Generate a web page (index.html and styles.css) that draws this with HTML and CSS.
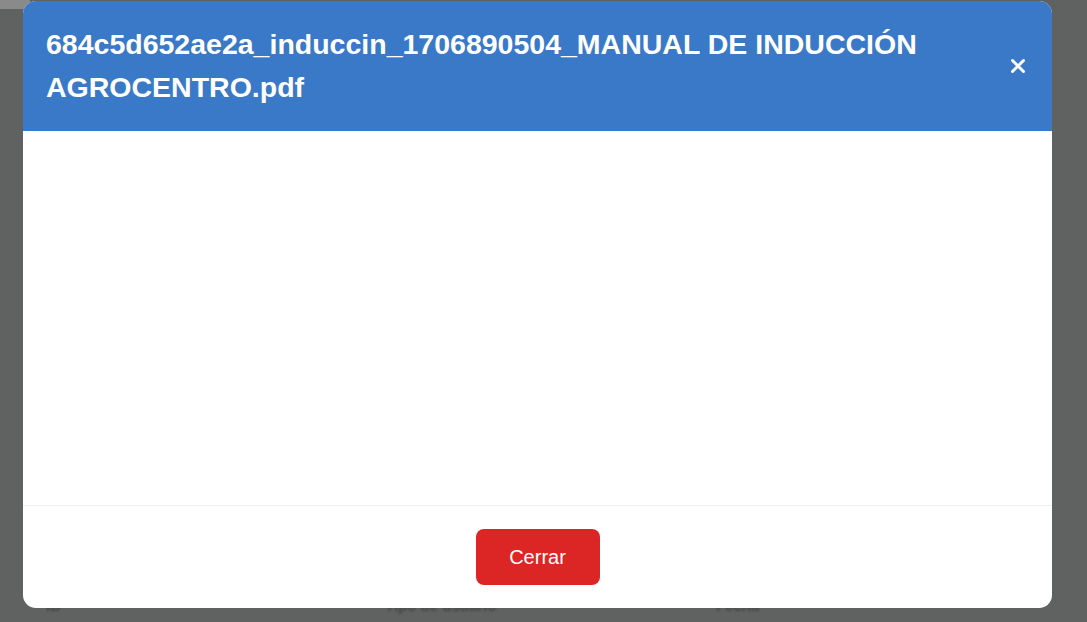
FILE: index.html
```html
<!DOCTYPE html>
<html lang="es">
<head>
<meta charset="utf-8">
<title>Documento</title>
<link rel="stylesheet" href="styles.css">
</head>
<body>
<div class="page">
  <div class="corner-patch"></div>
  <div class="table-head">
    <span class="th th-id">ID</span>
    <span class="th th-type">Tipo de usuario</span>
    <span class="th th-date">Fecha</span>
  </div>
</div>
<div class="overlay">
  <div class="modal">
    <div class="modal-header">
      <h2 class="modal-title">684c5d652ae2a_induccin_1706890504_MANUAL DE INDUCCIÓN AGROCENTRO.pdf</h2>
      <button class="close-btn" aria-label="Cerrar">
        <svg width="16" height="16" viewBox="0 0 16 16"><path d="M2.5 2.5 L13.5 13.5 M13.5 2.5 L2.5 13.5" stroke="#fff" stroke-width="3" stroke-linecap="round"/></svg>
      </button>
    </div>
    <div class="modal-body"></div>
    <div class="modal-footer">
      <button class="btn-close">Cerrar</button>
    </div>
  </div>
</div>
</body>
</html>
```
FILE: styles.css
```css
* { box-sizing: border-box; }
html, body { margin: 0; padding: 0; }
body {
  width: 1087px;
  height: 622px;
  overflow: hidden;
  font-family: "Liberation Sans", Arial, sans-serif;
  background: #606161;
  position: relative;
}
.page {
  width: 100%;
  height: 100%;
  position: relative;
}
.corner-patch {
  position: absolute;
  left: 0;
  top: 0;
  width: 30px;
  height: 9px;
  background: #8a8a8a;
}
.table-head {
  position: absolute;
  left: 0;
  top: 597px;
  width: 100%;
  height: 20px;
}
.th {
  position: absolute;
  top: 0;
  font-size: 15px;
  font-weight: bold;
  color: #454545;
  filter: blur(1.2px);
}
.th-id { left: 46px; }
.th-type { left: 385px; }
.th-date { left: 716px; }

.overlay {
  position: absolute;
  inset: 0;
  display: flex;
  justify-content: flex-start;
  align-items: flex-start;
  padding: 1px 0 0 23px;
}
.modal {
  width: 1029px;
  height: 607px;
  background: #fff;
  border-radius: 13px;
  overflow: hidden;
  display: flex;
  flex-direction: column;
}
.modal-header {
  background: #3979c7;
  height: 130px;
  flex: none;
  display: flex;
  align-items: center;
  justify-content: space-between;
  padding: 0 24px 0 23px;
}
.modal-title {
  margin: 0;
  color: #fff;
  font-size: 28.5px;
  font-weight: bold;
  line-height: 43px;
  max-width: 920px;
}
.close-btn {
  background: none;
  border: 0;
  padding: 0;
  margin-right: 2px;
  width: 16px;
  height: 16px;
  display: flex;
  cursor: pointer;
}
.modal-body {
  flex: 1;
  border-bottom: 1px solid #efefef;
}
.modal-footer {
  flex: none;
  height: 102px;
  display: flex;
  align-items: center;
  justify-content: center;
}
.btn-close {
  width: 124px;
  height: 56px;
  border: 0;
  border-radius: 8px;
  background: #dc2626;
  color: #fff;
  font-family: "Liberation Sans", Arial, sans-serif;
  font-size: 20px;
  cursor: pointer;
}
```
